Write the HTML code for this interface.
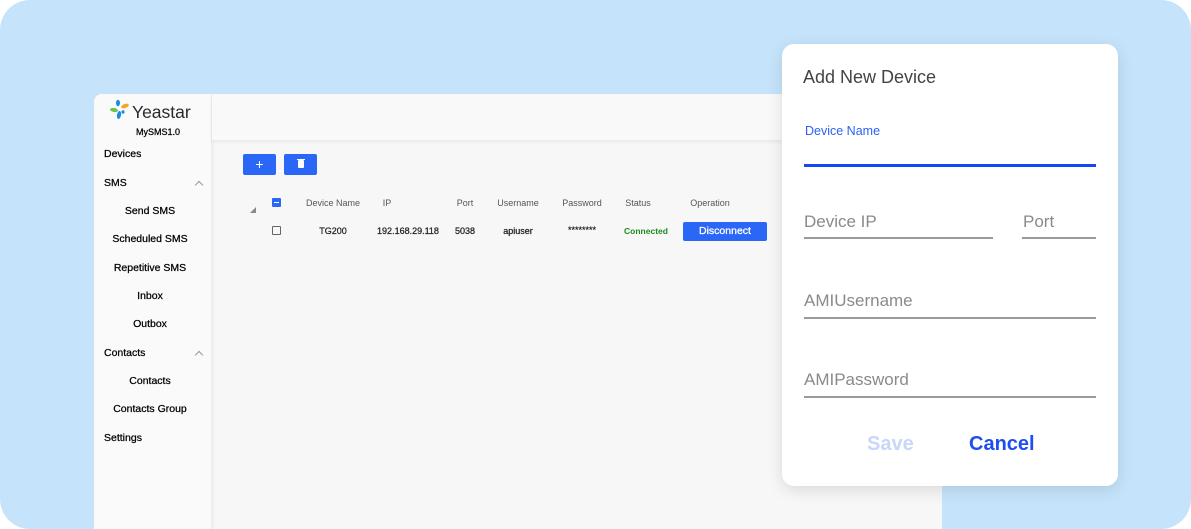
<!DOCTYPE html>
<html><head><meta charset="utf-8"><style>
*{margin:0;padding:0;box-sizing:border-box}
body{width:1191px;height:529px;background:#fff;font-family:"Liberation Sans",sans-serif;position:relative;overflow:hidden}
.bg{position:absolute;left:0;top:0;width:1191px;height:529px;background:#c5e4fb;border-radius:30px}
.app{position:absolute;left:94px;top:94px;width:848px;height:435px;background:#f7f7f7;border-top-left-radius:8px;overflow:hidden}
.side{position:absolute;left:0;top:0;width:117px;height:435px;background:#fafafa;box-shadow:1px 0 4px rgba(0,0,0,.08)}
.head{position:absolute;left:118px;top:0;right:0;height:46px;background:#f9f9f9;box-shadow:0 2px 4px rgba(0,0,0,.06)}
.t{position:absolute;font-size:10.5px;color:#000;white-space:nowrap;-webkit-text-stroke:0.25px #000}
.c{transform:translateX(-50%)}
.chev{position:absolute;width:6px;height:6px;border-left:1px solid #999;border-top:1px solid #999;transform:rotate(45deg)}
.btn{position:absolute;background:#2b67f6;border-radius:2px;color:#fff}
.th{position:absolute;font-size:9px;color:#555;white-space:nowrap;transform:translateX(-50%)}
.td{position:absolute;font-size:9px;color:#222;white-space:nowrap;transform:translateX(-50%);-webkit-text-stroke:0.25px #222}
.dlg{position:absolute;left:782px;top:44px;width:336px;height:442px;background:#fff;border-radius:12px;box-shadow:0 4px 16px rgba(0,0,0,.12)}
.lbl{position:absolute;font-size:17px;color:#8a8a8a;white-space:nowrap}
.ln{position:absolute;height:2px;background:#9a9a9a}
</style></head><body>
<div class="bg"></div>
<div class="app">
 <div class="side">
  <svg style="position:absolute;left:16px;top:5px" width="22" height="24" viewBox="0 0 22 24">
   <ellipse cx="8" cy="4" rx="2" ry="3.2" fill="#1a8de0"/>
   <ellipse cx="15" cy="7" rx="4" ry="2" fill="#f6a623" transform="rotate(-20 15 7)"/>
   <ellipse cx="4" cy="11" rx="4" ry="2" fill="#6cc24a" transform="rotate(10 4 11)"/>
   <ellipse cx="9" cy="16" rx="2" ry="4" fill="#1a8de0" transform="rotate(10 9 16)"/>
   <ellipse cx="13" cy="13" rx="1.6" ry="1.8" fill="#1a8de0"/>
  </svg>
  <div class="t" style="left:38px;top:8px;font-size:17.5px;color:#2a2a2a;-webkit-text-stroke:0">Yeastar</div>
  <div class="t" style="left:42px;top:33px;font-size:9px">MySMS1.0</div>
  <div class="t" style="left:10px;top:54px">Devices</div>
  <div class="t" style="left:10px;top:83px">SMS</div><div class="chev" style="left:102px;top:88px"></div>
  <div class="t c" style="left:56px;top:111px">Send SMS</div>
  <div class="t c" style="left:56px;top:139px">Scheduled SMS</div>
  <div class="t c" style="left:56px;top:168px">Repetitive SMS</div>
  <div class="t c" style="left:56px;top:196px">Inbox</div>
  <div class="t c" style="left:56px;top:224px">Outbox</div>
  <div class="t" style="left:10px;top:253px">Contacts</div><div class="chev" style="left:102px;top:258px"></div>
  <div class="t c" style="left:56px;top:281px">Contacts</div>
  <div class="t c" style="left:56px;top:309px">Contacts Group</div>
  <div class="t" style="left:10px;top:338px">Settings</div>
 </div>
 <div class="head"></div>
 <div class="btn" style="left:149px;top:60px;width:33px;height:21px;font-size:14px;text-align:center;line-height:20px">+</div>
 <div class="btn" style="left:190px;top:60px;width:33px;height:21px"><div style="position:absolute;left:14px;top:6px;width:6px;height:8px;background:#fff;border-radius:1px"></div><div style="position:absolute;left:13px;top:4.5px;width:8px;height:1.5px;background:#fff"></div></div>
 <svg style="position:absolute;left:155px;top:112px" width="8" height="8"><path d="M7 1 L7 7 L1 7Z" fill="#888"/></svg>
 <div style="position:absolute;left:178px;top:104px;width:9px;height:9px;background:#2b67f6;border-radius:1px"><div style="position:absolute;left:2px;top:4px;width:5px;height:1.3px;background:#fff"></div></div>
 <div style="position:absolute;left:178px;top:132px;width:9px;height:9px;border:1px solid #666;border-radius:1px"></div>
 <div class="th" style="left:239px;top:104px">Device Name</div>
 <div class="th" style="left:293px;top:104px">IP</div>
 <div class="th" style="left:371px;top:104px">Port</div>
 <div class="th" style="left:424px;top:104px">Username</div>
 <div class="th" style="left:488px;top:104px">Password</div>
 <div class="th" style="left:544px;top:104px">Status</div>
 <div class="th" style="left:616px;top:104px">Operation</div>
 <div class="td" style="left:239px;top:132px">TG200</div>
 <div class="td" style="left:314px;top:132px">192.168.29.118</div>
 <div class="td" style="left:371px;top:132px">5038</div>
 <div class="td" style="left:424px;top:132px">apiuser</div>
 <div class="td" style="left:488px;top:131px">********</div>
 <div class="td" style="left:552px;top:132px;color:#1e8a1e;font-weight:bold;font-size:8.5px;-webkit-text-stroke:0">Connected</div>
 <div class="btn" style="left:589px;top:128px;width:84px;height:19px;font-size:10.5px;text-align:center;line-height:19px;-webkit-text-stroke:0.3px #fff">Disconnect</div>
</div>
<div class="dlg">
 <div class="lbl" style="left:21px;top:23px;font-size:18px;color:#444">Add New Device</div>
 <div class="lbl" style="left:23px;top:80px;font-size:12.5px;color:#2b5ff6">Device Name</div>
 <div class="ln" style="left:22px;top:120px;width:292px;height:3px;background:#1446f5"></div>
 <div class="lbl" style="left:22px;top:168px">Device IP</div>
 <div class="ln" style="left:22px;top:193px;width:189px"></div>
 <div class="lbl" style="left:241px;top:168px">Port</div>
 <div class="ln" style="left:240px;top:193px;width:74px"></div>
 <div class="lbl" style="left:22px;top:247px">AMIUsername</div>
 <div class="ln" style="left:22px;top:273px;width:292px"></div>
 <div class="lbl" style="left:22px;top:326px">AMIPassword</div>
 <div class="ln" style="left:22px;top:352px;width:292px"></div>
 <div class="lbl" style="left:85px;top:389px;font-size:20px;font-weight:bold;color:#c8d6fb">Save</div>
 <div class="lbl" style="left:187px;top:389px;font-size:20px;font-weight:bold;color:#1d4ff0">Cancel</div>
</div>
</body></html>
